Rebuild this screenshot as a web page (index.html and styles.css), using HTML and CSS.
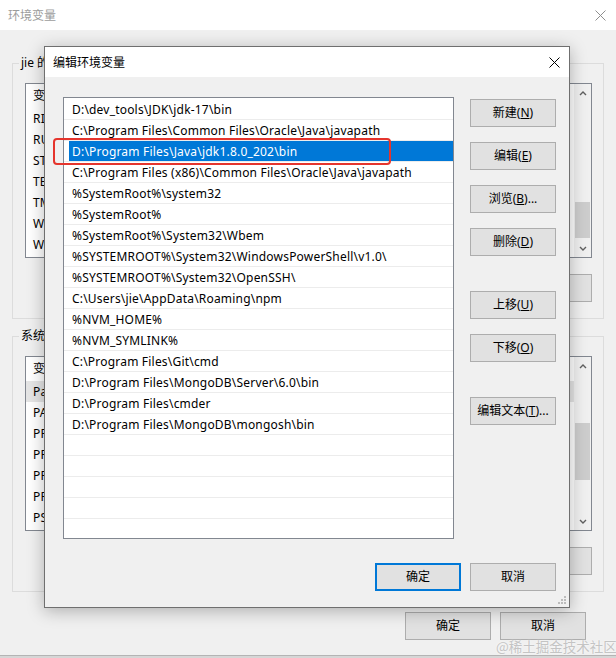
FILE: index.html
```html
<!DOCTYPE html>
<html lang="zh-CN">
<head>
<meta charset="utf-8">
<title>编辑环境变量</title>
<link rel="stylesheet" href="styles.css">
</head>
<body>
<div class="screen">
  <div class="bgwin">
    <div class="bg-title">
      <span class="bg-title-text">环境变量</span>
      <svg class="bg-close" width="11" height="11" viewBox="0 0 11 11"><path d="M0.5 0.5L10.5 10.5M10.5 0.5L0.5 10.5" stroke="#8e8e8e" stroke-width="1" fill="none"/></svg>
    </div>
    <div class="bg-body">
      <fieldset class="group">
        <legend>jie 的用户变量(<u>U</u>)</legend>
        <div class="varlist">
          <div class="varlist-main">
            <div class="var-head">变量</div>
            <div class="var-row">RIDER</div>
            <div class="var-row">RUBY_HOME</div>
            <div class="var-row">STORM</div>
            <div class="var-row">TEMP</div>
            <div class="var-row">TMP</div>
            <div class="var-row">WEBIDE</div>
            <div class="var-row">WEBSTORM</div>
          </div>
          <div class="vscroll">
            <div class="vs-btn"><svg width="8" height="6" viewBox="0 0 8 6"><path d="M1 5L4 2L7 5" stroke="#606060" stroke-width="1.4" fill="none"/></svg></div>
            <div class="vs-track"><div class="thumb thumb-user"></div></div>
            <div class="vs-btn"><svg width="8" height="6" viewBox="0 0 8 6"><path d="M1 1L4 4L7 1" stroke="#606060" stroke-width="1.4" fill="none"/></svg></div>
          </div>
        </div>
        <div class="group-buttons">
          <button class="btn">新建(<u>N</u>)...</button>
          <button class="btn">编辑(<u>E</u>)...</button>
          <button class="btn">删除(<u>D</u>)</button>
        </div>
      </fieldset>
      <fieldset class="group">
        <legend>系统变量(<u>S</u>)</legend>
        <div class="varlist">
          <div class="varlist-main">
            <div class="var-head">变量</div>
            <div class="var-row sel">Path</div>
            <div class="var-row">PATHEXT</div>
            <div class="var-row">PROCESSOR_ARCHITECTURE</div>
            <div class="var-row">PROCESSOR_IDENTIFIER</div>
            <div class="var-row">PROCESSOR_LEVEL</div>
            <div class="var-row">PROCESSOR_REVISION</div>
            <div class="var-row">PSModulePath</div>
          </div>
          <div class="vscroll">
            <div class="vs-btn"><svg width="8" height="6" viewBox="0 0 8 6"><path d="M1 5L4 2L7 5" stroke="#606060" stroke-width="1.4" fill="none"/></svg></div>
            <div class="vs-track"><div class="thumb thumb-sys"></div></div>
            <div class="vs-btn"><svg width="8" height="6" viewBox="0 0 8 6"><path d="M1 1L4 4L7 1" stroke="#606060" stroke-width="1.4" fill="none"/></svg></div>
          </div>
        </div>
        <div class="group-buttons">
          <button class="btn">新建(<u>W</u>)...</button>
          <button class="btn">编辑(<u>I</u>)...</button>
          <button class="btn">删除(<u>L</u>)</button>
        </div>
      </fieldset>
      <div class="bg-footer">
        <button class="btn">确定</button>
        <button class="btn">取消</button>
      </div>
    </div>
    <div class="taskstrip"></div>
  </div>

  <div class="dialog">
    <div class="dlg-title">
      <span class="dlg-title-text">编辑环境变量</span>
      <svg class="dlg-close" width="11" height="11" viewBox="0 0 11 11"><path d="M0.5 0.5L10.5 10.5M10.5 0.5L0.5 10.5" stroke="#000" stroke-width="1" fill="none"/></svg>
    </div>
    <div class="dlg-body">
      <div class="pathlist">
        <div class="path-row">D:\dev_tools\JDK\jdk-17\bin</div>
        <div class="path-row">C:\Program Files\Common Files\Oracle\Java\javapath</div>
        <div class="path-row selected"><span class="hl">D:\Program Files\Java\jdk1.8.0_202\bin</span></div>
        <div class="path-row">C:\Program Files (x86)\Common Files\Oracle\Java\javapath</div>
        <div class="path-row">%SystemRoot%\system32</div>
        <div class="path-row">%SystemRoot%</div>
        <div class="path-row">%SystemRoot%\System32\Wbem</div>
        <div class="path-row">%SYSTEMROOT%\System32\WindowsPowerShell\v1.0\</div>
        <div class="path-row">%SYSTEMROOT%\System32\OpenSSH\</div>
        <div class="path-row">C:\Users\jie\AppData\Roaming\npm</div>
        <div class="path-row">%NVM_HOME%</div>
        <div class="path-row">%NVM_SYMLINK%</div>
        <div class="path-row">C:\Program Files\Git\cmd</div>
        <div class="path-row">D:\Program Files\MongoDB\Server\6.0\bin</div>
        <div class="path-row">D:\Program Files\cmder</div>
        <div class="path-row">D:\Program Files\MongoDB\mongosh\bin</div>
        <div class="path-row"></div>
        <div class="path-row"></div>
        <div class="path-row"></div>
        <div class="path-row"></div>
      </div>
      <div class="dlg-side">
        <button class="btn">新建(<u>N</u>)</button>
        <button class="btn">编辑(<u>E</u>)</button>
        <button class="btn">浏览(<u>B</u>)...</button>
        <button class="btn">删除(<u>D</u>)</button>
        <button class="btn spaced">上移(<u>U</u>)</button>
        <button class="btn">下移(<u>O</u>)</button>
        <button class="btn spaced">编辑文本(<u>T</u>)...</button>
      </div>
      <div class="dlg-footer">
        <button class="btn default">确定</button>
        <button class="btn">取消</button>
      </div>
    </div>
    <svg class="grip" width="9" height="9" viewBox="0 0 9 9">
      <rect x="6" y="0" width="2" height="2" fill="#bcbcbc"/>
      <rect x="3" y="3" width="2" height="2" fill="#bcbcbc"/>
      <rect x="6" y="3" width="2" height="2" fill="#bcbcbc"/>
      <rect x="0" y="6" width="2" height="2" fill="#bcbcbc"/>
      <rect x="3" y="6" width="2" height="2" fill="#bcbcbc"/>
      <rect x="6" y="6" width="2" height="2" fill="#bcbcbc"/>
    </svg>
  </div>

  <div class="annot"></div>
  <div class="watermark">@稀土掘金技术社区</div>
</div>
</body>
</html>
```
FILE: styles.css
```css
* { box-sizing: border-box; }
html, body { margin: 0; padding: 0; }
body {
  width: 616px;
  height: 658px;
  overflow: hidden;
  background: #f0f0f0;
  font-family: "Noto Sans", "Noto Sans CJK SC", sans-serif;
  font-size: 12px;
  color: #000;
}
.screen { position: relative; width: 616px; height: 658px; overflow: hidden; }

/* background window */
.bgwin { display: flex; flex-direction: column; height: 658px; }
.bg-title {
  height: 30px;
  flex: none;
  background: #fff;
  display: flex;
  align-items: center;
  justify-content: space-between;
  padding: 0 10px 0 8px;
}
.bg-title-text { color: #9c9c9c; font-family: "Noto Sans CJK SC", sans-serif; line-height: 16px; }
.bg-body { flex: 1; padding: 25px 12px 0 12px; }
.group {
  margin: 0;
  min-width: 0;
  border: 1px solid #dcdcdc;
  padding: 12px 11px 16px 12px;
}
.group + .group { margin-top: 9px; }
.group legend { padding: 0 2px; margin-left: -6px; line-height: 16px; }
.varlist { display: flex; height: 175px; border: 1px solid #828790; background: #fff; }
.varlist-main { flex: 1; overflow: hidden; }
.var-head { height: 24px; line-height: 24px; padding-left: 7px; }
.var-row { height: 21px; line-height: 22px; padding-left: 7px; white-space: nowrap; letter-spacing: 0.2px; }
.var-row.sel { background: #e5e5e5; }
.vscroll { width: 17px; flex: none; display: flex; flex-direction: column; background: #f0f0f0; }
.vs-btn { height: 17px; display: flex; align-items: center; justify-content: center; }
.vs-track { flex: 1; display: flex; flex-direction: column; padding: 0 1px; }
.thumb { background: #cdcdcd; }
.thumb-user { margin-top: 101px; height: 36px; }
.thumb-sys { margin-top: 49px; height: 57px; }
.group-buttons { display: flex; justify-content: flex-end; gap: 9px; margin-top: 16px; }
.bg-footer { display: flex; justify-content: flex-end; gap: 9px; margin-top: 20px; padding-right: 18px; }
.taskstrip { height: 3px; flex: none; background: #d6d6d6; border-top: 1px solid #b4b4b4; }

.btn {
  width: 86px;
  height: 28px;
  padding: 0;
  background: #e1e1e1;
  border: 1px solid #adadad;
  font: inherit;
  line-height: 26px;
  color: #000;
  text-align: center;
}
.btn u { text-underline-offset: 1px; }

/* dialog */
.dialog {
  position: absolute;
  left: 44px;
  top: 46px;
  width: 526px;
  height: 562px;
  border: 1px solid #6f6f6f;
  background: #f0f0f0;
  box-shadow: 0 3px 16px rgba(0, 0, 0, 0.28);
  display: flex;
  flex-direction: column;
}
.dlg-title {
  height: 30px;
  flex: none;
  background: #fff;
  display: flex;
  align-items: center;
  justify-content: space-between;
  padding: 0 9px 0 8px;
}
.dlg-title-text { font-family: "Noto Sans CJK SC", sans-serif; line-height: 16px; }
.dlg-body {
  flex: 1;
  padding: 20px 13px 16px 18px;
  display: grid;
  grid-template-columns: 391px 86px;
  grid-template-rows: 442px 28px;
  column-gap: 16px;
  row-gap: 24px;
}
.pathlist { border: 1px solid #828790; background: #fff; padding-top: 1px; overflow: hidden; }
.path-row {
  height: 21px;
  border-bottom: 1px solid #ececec;
  padding: 2px 0 0 8px;
  line-height: 18px;
  letter-spacing: 0.2px;
  white-space: nowrap;
  display: flex;
}
.path-row.selected { padding: 0 0 0 5px; }
.path-row .hl { flex: 1; height: 20px; background: #0078d7; color: #fff; padding: 2px 0 0 3px; line-height: 18px; }
.dlg-side { display: flex; flex-direction: column; gap: 15px; padding-top: 2px; }
.dlg-side .spaced { margin-top: 20px; }
.dlg-footer { grid-column: 1 / span 2; display: flex; justify-content: flex-end; gap: 9px; }
.btn.default { border: 2px solid #0078d7; line-height: 24px; }
.grip { position: absolute; right: 2px; bottom: 2px; }

/* overlays */
.annot {
  position: absolute;
  left: 53px;
  top: 138px;
  width: 338px;
  height: 27px;
  border: 2px solid #e5352d;
  border-radius: 4px;
}
.watermark {
  position: absolute;
  left: 496px;
  top: 637px;
  font-family: "Noto Sans CJK SC", sans-serif;
  font-size: 13.5px;
  line-height: 18px;
  color: #c4c4c4;
  white-space: nowrap;
  text-shadow: 0 0 2px #fff;
}
```
